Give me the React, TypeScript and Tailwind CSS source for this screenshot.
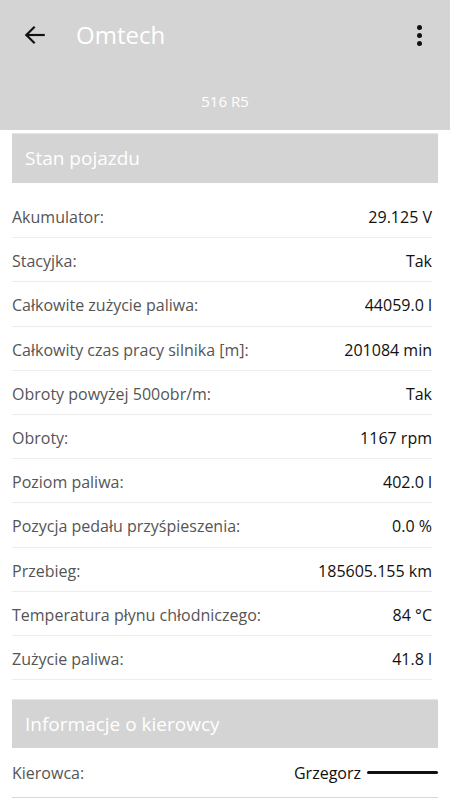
import React from "react";

const rows: [string, string][] = [
  ["Akumulator:", "29.125 V"],
  ["Stacyjka:", "Tak"],
  ["Całkowite zużycie paliwa:", "44059.0 l"],
  ["Całkowity czas pracy silnika [m]:", "201084 min"],
  ["Obroty powyżej 500obr/m:", "Tak"],
  ["Obroty:", "1167 rpm"],
  ["Poziom paliwa:", "402.0 l"],
  ["Pozycja pedału przyśpieszenia:", "0.0 %"],
  ["Przebieg:", "185605.155 km"],
  ["Temperatura płynu chłodniczego:", "84 °C"],
  ["Zużycie paliwa:", "41.8 l"],
];

export default function App() {
  return (
    <div
      className="w-[450px] h-[800px] overflow-hidden bg-white"
      style={{ fontFamily: '"Open Sans", "Noto Sans", sans-serif' }}
    >
      <div className="h-[130px] bg-[#d4d4d4] flex flex-col">
        <div className="h-[70px] flex items-center pl-[22px] pr-[22px]">
          <svg width="26" height="26" viewBox="0 0 24 24" fill="none" stroke="#111" strokeWidth="2" strokeLinecap="square">
            <path d="M20 12H4.5" />
            <path d="M11 5l-7 7 7 7" />
          </svg>
          <div className="ml-[28px] text-[24px] text-white leading-none">Omtech</div>
          <div className="ml-auto flex flex-col items-center gap-[3px] mr-[6px]">
            <div className="w-[5px] h-[5px] rounded-full bg-[#111]" />
            <div className="w-[5px] h-[5px] rounded-full bg-[#111]" />
            <div className="w-[5px] h-[5px] rounded-full bg-[#111]" />
          </div>
        </div>
        <div className="mt-[24px] text-center text-white text-[15px] leading-none">516 R5</div>
      </div>

      <div className="px-[12px] pt-[3px]">
        <div className="h-[50px] bg-[#d4d4d4] border-t border-[#e6e6e6] flex items-center pl-[13px] text-white text-[19px]">
          Stan pojazdu
        </div>
        <div className="mt-[11px] pr-[6px]">
          {rows.map(([l, v]) => (
            <div key={l} className="h-[44.2px] pt-[3px] border-b border-[#ececec] flex items-center justify-between text-[16px]">
              <span className="text-[#555]">{l}</span>
              <span className="text-[#111]">{v}</span>
            </div>
          ))}
        </div>
        <div className="mt-[19px] h-[49px] bg-[#d4d4d4] border-t border-[#e6e6e6] flex items-center pl-[13px] text-white text-[19px]">
          Informacje o kierowcy
        </div>
        <div className="h-[50px] border-b border-[#d8d8d8] flex items-center justify-between text-[16px]">
          <span className="text-[#555]">Kierowca:</span>
          <span className="flex items-center text-[#111]">
            Grzegorz
            <span className="ml-[6px] w-[71px] h-[3px] bg-[#111] rounded-full" />
          </span>
        </div>
      </div>
    </div>
  );
}
